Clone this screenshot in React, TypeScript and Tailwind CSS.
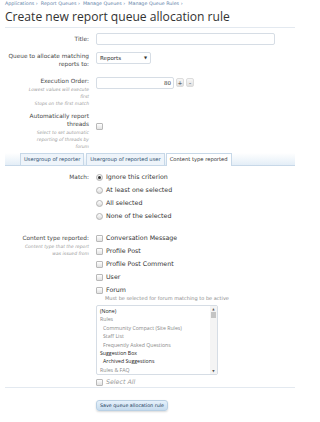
import React from 'react';

const font = { fontFamily: '"DejaVu Sans", Tahoma, sans-serif' };

function Check({ checked = false }: { checked?: boolean }) {
  return (
    <span className="inline-block h-[7px] w-[7px] shrink-0 rounded-[1px] border border-[#b9b9b9] bg-gradient-to-b from-[#ffffff] to-[#e2e2e2]">
      {checked && <span className="block h-full w-full bg-[#555]" />}
    </span>
  );
}

function Radio({ checked = false }: { checked?: boolean }) {
  return (
    <span className="flex h-[7px] w-[7px] shrink-0 items-center justify-center rounded-full border border-[#b4b4b4] bg-gradient-to-b from-[#ffffff] to-[#dcdcdc]">
      {checked && <span className="block h-[3px] w-[3px] rounded-full bg-[#333]" />}
    </span>
  );
}

function Label({ children, hint }: { children: React.ReactNode; hint?: React.ReactNode }) {
  return (
    <div className="text-right">
      <div className="text-[5.8px] leading-[8px] text-[#474747]">{children}</div>
      {hint && <div className="mt-[1px] text-[4.5px] italic leading-[7px] text-[#a0a0a0]">{hint}</div>}
    </div>
  );
}

const options: { text: string; indent?: boolean; dark?: boolean }[] = [
  { text: '(None)', dark: true },
  { text: 'Rules' },
  { text: 'Community Compact (Site Rules)', indent: true },
  { text: 'Staff List', indent: true },
  { text: 'Frequently Asked Questions', indent: true },
  { text: 'Suggestion Box', dark: true },
  { text: 'Archived Suggestions', indent: true, dark: true },
  { text: 'Rules & FAQ' },
];

export default function App() {
  return (
    <div className="h-[422px] w-[300px] overflow-hidden bg-white" style={font}>
      <div className="px-[5px] pt-[1px] text-[4.8px] leading-[6px] text-[#6282a8]">
        Applications › &nbsp;Report Queues › &nbsp;Manage Queues › &nbsp;Manage Queue Rules ›
      </div>
      <h1
        className="mx-[5px] mt-[1px] border-b border-[#e3e9f0] pb-[2px] text-[12.1px] leading-[17px] text-[#333]"
        style={{ fontFamily: '"Open Sans", "DejaVu Sans", sans-serif' }}
      >
        Create new report queue allocation rule
      </h1>

      <div className="grid grid-cols-[89px_1fr] gap-x-[7px] pr-[25px]">
        {/* Title */}
        <div className="mt-[5px] flex h-[12px] items-center justify-end">
          <Label>Title:</Label>
        </div>
        <div className="mt-[5px] h-[12px] rounded-[2px] border border-[#d6dde5] bg-white" />

        {/* Queue */}
        <div className="mt-[7px]">
          <Label>
            Queue to allocate matching
            <br />
            reports to:
          </Label>
        </div>
        <div className="mt-[7px]">
          <div className="flex h-[12px] w-[55px] items-center justify-between rounded-[2px] border border-[#d6dde5] bg-white px-[3px] text-[5.5px] text-[#333]">
            <span>Reports</span>
            <span className="text-[4px]">▼</span>
          </div>
        </div>

        {/* Execution order */}
        <div className="mt-[9px]">
          <Label hint={<>Lowest values will execute<br />first<br />Stops on the first match</>}>Execution Order:</Label>
        </div>
        <div className="mt-[9px] flex items-start gap-[2px]">
          <div className="flex h-[12px] w-[78px] items-center justify-end rounded-[2px] border border-[#d6dde5] bg-white px-[2px] text-[5.5px] text-[#333]">
            80
          </div>
          <div className="mt-[1px] flex h-[9px] w-[8px] items-center justify-center rounded-[2px] border border-[#dcdcdc] bg-gradient-to-b from-[#f8f8f8] to-[#e0e0e0] text-[6px] leading-none text-[#444]">
            +
          </div>
          <div className="mt-[1px] flex h-[9px] w-[8px] items-center justify-center rounded-[2px] border border-[#dcdcdc] bg-gradient-to-b from-[#f8f8f8] to-[#e0e0e0] text-[6px] leading-none text-[#444]">
            -
          </div>
        </div>

        {/* Auto report */}
        <div className="mt-[5px]">
          <Label hint={<>Select to set automatic<br />reporting of threads by<br />forum</>}>
            Automatically report<br />threads
          </Label>
        </div>
        <div className="mt-[6px]">
          <Check />
        </div>
      </div>

      {/* Tabs */}
      <div className="mx-[5px] mt-[3px] flex h-[13px] items-end border-b border-[#c7d8e8] bg-gradient-to-b from-[#ffffff] to-[#e4eef7] pl-[15px]">
        <div className="mr-[2px] flex h-[12px] items-center border border-b-0 border-[#c7d8e8] bg-[#eef4fa] px-[3px] text-[5.2px] text-[#2b4c6e]">
          Usergroup of reporter
        </div>
        <div className="mr-[1px] flex h-[12px] items-center border border-b-0 border-[#c7d8e8] bg-[#eef4fa] px-[3px] text-[5.2px] text-[#2b4c6e]">
          Usergroup of reported user
        </div>
        <div className="-mb-[1px] flex h-[13px] items-center border border-b-0 border-[#c7d8e8] bg-white px-[3px] text-[5.2px] text-[#333]">
          Content type reported
        </div>
      </div>

      <div className="grid grid-cols-[89px_1fr] gap-x-[7px] pr-[25px]">
        {/* Match */}
        <div className="mt-[7px]">
          <Label>Match:</Label>
        </div>
        <div className="mt-[7px] flex flex-col gap-[5px] text-[6.3px] leading-[8px] text-[#333]">
          {['Ignore this criterion', 'At least one selected', 'All selected', 'None of the selected'].map((t, i) => (
            <div key={t} className="flex items-center gap-[3px]">
              <Radio checked={i === 0} />
              <span>{t}</span>
            </div>
          ))}
        </div>

        {/* Content type */}
        <div className="mt-[14px]">
          <Label hint={<>Content type that the report<br />was issued from</>}>Content type reported:</Label>
        </div>
        <div className="mt-[14px] flex flex-col text-[6.3px] leading-[8px] text-[#333]">
          <div className="flex flex-col gap-[5px]">
            {['Conversation Message', 'Profile Post', 'Profile Post Comment', 'User', 'Forum'].map((t) => (
              <div key={t} className="flex items-center gap-[3px]">
                <Check />
                <span>{t}</span>
              </div>
            ))}
          </div>
          <div className="mt-[1px] pl-[9px] text-[5px] leading-[7px] text-[#8c8c8c]">
            Must be selected for forum matching to be active
          </div>
          <div
            className="mt-[3px] flex h-[70px] w-[122px] rounded-[2px] border border-[#d6dde5] bg-white"
            style={{ fontFamily: '"Open Sans", "DejaVu Sans", sans-serif' }}
          >
            <div className="flex-1 overflow-hidden pl-[3px] pt-[1px] text-[5.2px] leading-[8.4px]">
              {options.map((o) => (
                <div key={o.text} className={`${o.indent ? 'pl-[3px]' : ''} ${o.dark ? 'text-[#222]' : 'text-[#8a8a8a]'}`}>
                  {o.text}
                </div>
              ))}
            </div>
            <div className="flex w-[7px] flex-col items-center justify-between bg-[#f4f4f4] py-[1px]">
              <span className="text-[3px] leading-[4px] text-[#555]">▲</span>
              <span className="mb-auto mt-[1px] block h-[6px] w-[5px] bg-[#c4c4c4]" />
              <span className="text-[3px] leading-[4px] text-[#555]">▼</span>
            </div>
          </div>
          <div className="mt-[3px] flex items-center gap-[3px] text-[6.3px] italic text-[#9a9a9a]">
            <Check />
            <span>Select All</span>
          </div>
        </div>
      </div>

      <div className="mx-[5px] mt-[1px] border-t border-[#e3e9f0] pl-[91px] pt-[2px]">
        <div className="inline-flex h-[11px] items-center rounded-[3px] border border-[#b9d0e4] bg-gradient-to-b from-[#e6f1fb] to-[#c6dcef] px-[3px] text-[4.8px] text-[#1c3a58] shadow-[0_1px_2px_rgba(0,0,0,0.15)]">
          Save queue allocation rule
        </div>
      </div>
    </div>
  );
}
